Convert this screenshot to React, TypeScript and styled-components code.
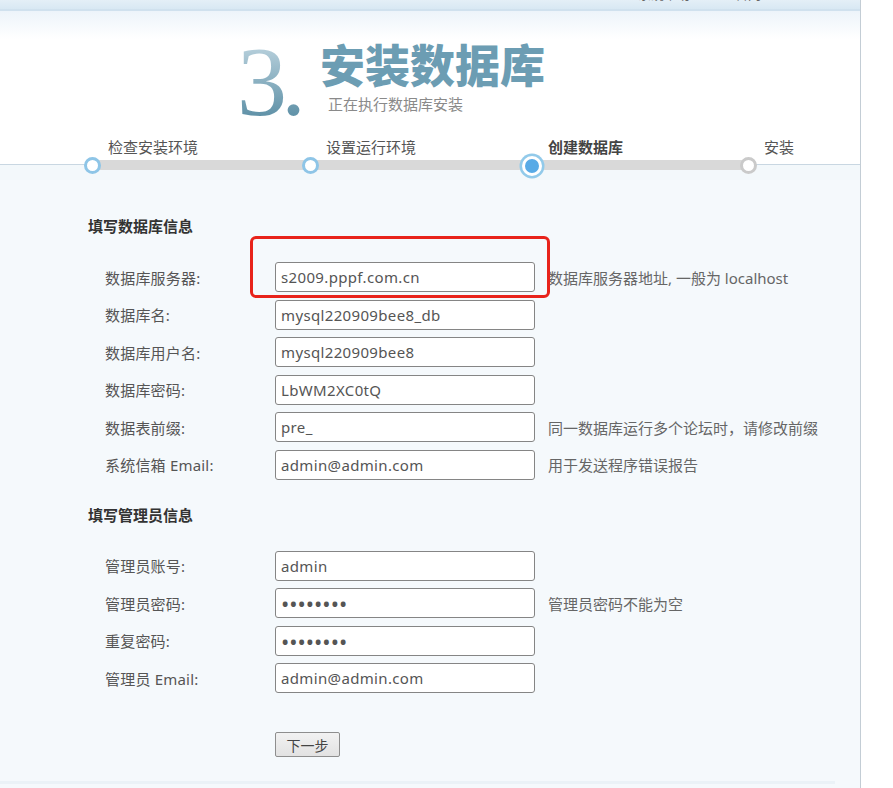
import styled, { createGlobalStyle } from "styled-components";

const GlobalStyle = createGlobalStyle`
  html, body {
    margin: 0;
    padding: 0;
    background: #fff;
    overflow: hidden;
  }
  body {
    font-family: "Noto Sans", "Noto Sans CJK SC", sans-serif;
  }
`;

const CJK = `"Noto Sans", "Noto Sans CJK SC", sans-serif`;

type StepState = "done" | "current" | "todo";

// segment widths follow the uneven spacing of the original progress bar
const steps: { label: string; state: StepState; width: number }[] = [
  { label: "检查安装环境", state: "done", width: 218 },
  { label: "设置运行环境", state: "done", width: 222 },
  { label: "创建数据库", state: "current", width: 216 },
  { label: "安装", state: "todo", width: 0 },
];

const dbFields = [
  { label: "数据库服务器:", value: "s2009.pppf.com.cn", hint: "数据库服务器地址, 一般为 localhost" },
  { label: "数据库名:", value: "mysql220909bee8_db" },
  { label: "数据库用户名:", value: "mysql220909bee8" },
  { label: "数据库密码:", value: "LbWM2XC0tQ" },
  { label: "数据表前缀:", value: "pre_", hint: "同一数据库运行多个论坛时，请修改前缀" },
  { label: "系统信箱 Email:", value: "admin@admin.com", hint: "用于发送程序错误报告" },
];

const adminFields = [
  { label: "管理员账号:", value: "admin" },
  { label: "管理员密码:", value: "admin123", password: true, hint: "管理员密码不能为空" },
  { label: "重复密码:", value: "admin123", password: true },
  { label: "管理员 Email:", value: "admin@admin.com" },
];

const App = () => {
  return (
    <>
      <GlobalStyle />
      <Page>
        <TopBar>
          <TopLink>系统帮助</TopLink>
          <TopLink>官网</TopLink>
        </TopBar>
        <Header>
          <TitleRow>
            <BigNumber>3.</BigNumber>
            <TitleText>
              <Title>安装数据库</Title>
              <Subtitle>正在执行数据库安装</Subtitle>
            </TitleText>
          </TitleRow>
        </Header>
        <Steps>
          {steps.map((s) => (
            <Step key={s.label} $width={s.width}>
              <StepLabel $current={s.state === "current"}>{s.label}</StepLabel>
              <Track $last={s.width === 0}>
                <Dot $state={s.state} />
              </Track>
            </Step>
          ))}
        </Steps>
        <FormArea>
          <SectionTitle>填写数据库信息</SectionTitle>
          <Fields>
            {dbFields.map((f, i) => (
              <Row key={f.label}>
                <Label>{f.label}</Label>
                <Input readOnly defaultValue={f.value} />
                {f.hint && <Hint>{f.hint}</Hint>}
                {i === 0 && <Highlight />}
              </Row>
            ))}
          </Fields>
          <SectionTitle>填写管理员信息</SectionTitle>
          <Fields>
            {adminFields.map((f) => (
              <Row key={f.label}>
                <Label>{f.label}</Label>
                <Input
                  readOnly
                  $password={f.password}
                  type={f.password ? "password" : "text"}
                  defaultValue={f.value}
                />
                {f.hint && <Hint>{f.hint}</Hint>}
              </Row>
            ))}
          </Fields>
          <Actions>
            <NextButton type="button">下一步</NextButton>
          </Actions>
          <FootLine />
        </FormArea>
      </Page>
    </>
  );
};

const Page = styled.div`
  width: 860px;
  height: 788px;
  border-right: 1px solid #c3cdd5;
  background: #f5f9fc;
  overflow: hidden;
`;

const TopBar = styled.div`
  height: 9px;
  overflow: hidden;
  display: flex;
  gap: 45px;
  padding-left: 638px;
  background: linear-gradient(#e4eff7, #d8e8f3);
  border-bottom: 2px solid #d0e1ee;
`;

const TopLink = styled.span`
  font-family: ${CJK};
  font-size: 13px;
  line-height: 14px;
  margin-top: -13px;
  color: #666;
`;

const Header = styled.div`
  background: linear-gradient(#edf4fa 0, #ffffff 28px);
  height: 124px;
`;

const TitleRow = styled.div`
  display: flex;
  align-items: flex-start;
  padding-left: 237px;
  padding-top: 21px;
`;

const BigNumber = styled.div`
  font-family: "Liberation Serif", serif;
  font-size: 100px;
  line-height: 100px;
  letter-spacing: -6px;
  background: linear-gradient(#b6cfdb 15%, #5f91a7 85%);
  -webkit-background-clip: text;
  background-clip: text;
  color: transparent;
`;

const TitleText = styled.div`
  display: flex;
  flex-direction: column;
  margin-left: 20px;
  margin-top: 9px;
`;

const Title = styled.div`
  font-family: ${CJK};
  font-size: 45px;
  line-height: 50px;
  font-weight: 900;
  color: #6c9db3;
`;

const Subtitle = styled.div`
  font-family: ${CJK};
  font-size: 15px;
  line-height: 18px;
  margin: 4px 0 0 8px;
  color: #8a8a8a;
`;

const Steps = styled.div`
  display: flex;
  padding-left: 92px;
  height: 45px;
  background: linear-gradient(
    #ffffff 0 29px,
    #c9d7e2 29px 30px,
    #f3f8fb 30px 100%
  );
`;

const Step = styled.div<{ $width: number }>`
  width: ${(p) => p.$width}px;
  display: flex;
  flex-direction: column;
`;

const StepLabel = styled.div<{ $current?: boolean }>`
  font-family: ${CJK};
  font-size: 15px;
  line-height: 20px;
  margin: 2px 0 3px 16px;
  white-space: nowrap;
  color: ${(p) => (p.$current ? "#444" : "#555")};
  font-weight: ${(p) => (p.$current ? 700 : 400)};
`;

const Track = styled.div<{ $last?: boolean }>`
  position: relative;
  height: 10px;
  background: ${(p) => (p.$last ? "transparent" : "#d9d9d9")};
`;

const Dot = styled.span<{ $state: StepState }>`
  position: absolute;
  box-sizing: border-box;
  border-radius: 50%;
  background: ${(p) => (p.$state === "current" ? "#58aae6" : "#fff")};
  width: ${(p) => (p.$state === "current" ? "20px" : "17px")};
  height: ${(p) => (p.$state === "current" ? "20px" : "17px")};
  left: ${(p) => (p.$state === "current" ? "-10px" : "-8.5px")};
  top: ${(p) => (p.$state === "current" ? "-4.5px" : "-3px")};
  border: ${(p) =>
    p.$state === "todo"
      ? "3px solid #cacaca"
      : p.$state === "done"
      ? "3px solid #8ec5e7"
      : "3px solid #fff"};
  box-shadow: ${(p) => (p.$state === "current" ? "0 0 0 2.5px #92caea" : "none")};
`;

const FormArea = styled.div`
  position: relative;
  padding: 36px 0 0 88px;
  background: #f5f9fc;
`;

const SectionTitle = styled.div`
  font-family: ${CJK};
  font-size: 15px;
  line-height: 20px;
  font-weight: 700;
  color: #333;
`;

const Fields = styled.div`
  display: flex;
  flex-direction: column;
  gap: 7.5px;
  margin: 26px 0 25px;
`;

const Row = styled.div`
  position: relative;
  display: flex;
  align-items: center;
  padding-left: 17px;
`;

const Label = styled.div`
  width: 170px;
  font-family: ${CJK};
  font-size: 15px;
  letter-spacing: 0.2px;
  color: #555;
`;

const Input = styled.input<{ $password?: boolean }>`
  box-sizing: border-box;
  width: 260px;
  height: 30px;
  margin: 0;
  padding: 0 5px;
  border: 1px solid #858585;
  border-radius: 3px;
  background: #fff;
  font-family: "Noto Sans", sans-serif;
  font-size: ${(p) => (p.$password ? "22px" : "15px")};
  letter-spacing: ${(p) => (p.$password ? "0" : "0.35px")};
  color: #555;
  outline: none;
`;

const Hint = styled.div`
  margin-left: 13px;
  font-family: ${CJK};
  font-size: 15px;
  color: #666;
  white-space: nowrap;
`;

const Highlight = styled.div`
  position: absolute;
  left: 162px;
  top: -26px;
  width: 300px;
  height: 62px;
  box-sizing: border-box;
  border: 3px solid #e8231b;
  border-radius: 6px;
  pointer-events: none;
`;

const Actions = styled.div`
  padding-left: 187px;
  margin-top: 39px;
`;

const NextButton = styled.button`
  box-sizing: border-box;
  width: 65px;
  height: 25px;
  padding: 0;
  border: 1px solid #8e8e8e;
  border-radius: 2px;
  background: linear-gradient(#f2f2f2, #e2e2e2);
  font-family: ${CJK};
  font-size: 14px;
  color: #444;
`;

const FootLine = styled.div`
  height: 3px;
  margin: 24px 25px 0 -88px;
  background: #ebf2f7;
`;

export default App;
